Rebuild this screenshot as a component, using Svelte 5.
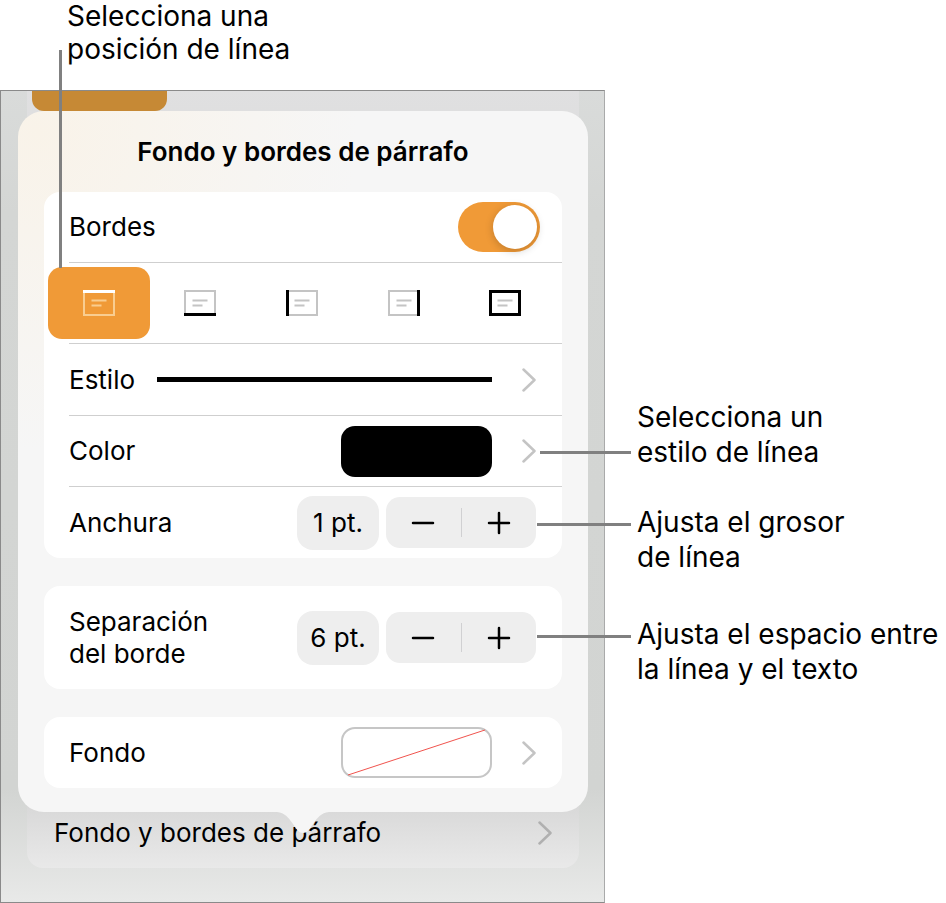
<script>
  let borders = $state(true);
  let position = $state("top");
  let width = $state(1);
  let inset = $state(6);

  const positions = [
    { id: "top", label: "Borde superior", edge: "M0 1.5H32" },
    { id: "bottom", label: "Borde inferior", edge: "M0 24.5H32" },
    { id: "left", label: "Borde izquierdo", edge: "M1.5 0V26" },
    { id: "right", label: "Borde derecho", edge: "M30.5 0V26" },
    { id: "all", label: "Todos los bordes", edge: "M1.5 1.5H30.5V24.5H1.5Z" },
  ];
</script>

{#snippet chevron()}
  <svg class="chevron" width="14" height="24" viewBox="0 0 14 24" aria-hidden="true">
    <path d="M1.5 1.5L12.5 12L1.5 22.5" />
  </svg>
{/snippet}

{#snippet stepper(name, value, change)}
  <div class="amount">
    <input class="value" type="text" aria-label={name} value="{value} pt." readonly />
    <div class="stepper">
      <button type="button" aria-label="Reducir {name}" onclick={() => change(-1)}>
        <svg width="24" height="24" viewBox="0 0 24 24"><path d="M2 12H22" /></svg>
      </button>
      <span class="divider"></span>
      <button type="button" aria-label="Aumentar {name}" onclick={() => change(1)}>
        <svg width="24" height="24" viewBox="0 0 24 24"><path d="M2 12H22M12 2V22" /></svg>
      </button>
    </div>
  </div>
{/snippet}

<main class="figure">
  <p class="callout first">Selecciona una<br />posición de línea</p>

  <div class="body">
    <section class="screen">
      <div class="sheet">
        <div class="tab"></div>
        <button type="button" class="sheet-row">
          <span>Fondo y bordes de párrafo</span>
          {@render chevron()}
        </button>
      </div>

      <div class="popover">
        <h1>Fondo y bordes de párrafo</h1>

        <div class="card">
          <div class="row short switch">
            <label for="borders">Bordes</label>
            <input id="borders" class="toggle" type="checkbox" role="switch" bind:checked={borders} />
          </div>
          <div class="rule"></div>
          <div class="positions">
            {#each positions as p}
              <button
                type="button"
                class:on={position === p.id}
                aria-label={p.label}
                aria-pressed={position === p.id}
                onclick={() => (position = p.id)}
              >
                <svg width="32" height="26" viewBox="0 0 32 26">
                  <path class="frame" d="M1 1H31V25H1Z" />
                  <path class="lines" d="M8.5 10.5H23.5M8.5 15.5H18.5" />
                  <path class="edge" d={p.edge} />
                </svg>
              </button>
            {/each}
          </div>
          <div class="rule"></div>
          <button type="button" class="row">
            <span>Estilo</span>
            <span class="stroke"></span>
            {@render chevron()}
          </button>
          <div class="rule"></div>
          <button type="button" class="row short">
            <span>Color</span>
            <span class="swatch"></span>
            {@render chevron()}
          </button>
          <div class="rule"></div>
          <div class="row">
            <span>Anchura</span>
            {@render stepper("anchura", width, (d) => (width = Math.max(0, width + d)))}
          </div>
        </div>

        <div class="card">
          <div class="row tall">
            <span>Separación<br />del borde</span>
            {@render stepper("separación del borde", inset, (d) => (inset = Math.max(0, inset + d)))}
          </div>
        </div>

        <div class="card">
          <button type="button" class="row">
            <span>Fondo</span>
            <span class="swatch none">
              <svg viewBox="0 0 147 48" preserveAspectRatio="none"><path d="M5 47L142 1" /></svg>
            </span>
            {@render chevron()}
          </button>
        </div>

        <svg class="tail" width="52" height="22" viewBox="0 0 52 22" aria-hidden="true">
          <path d="M0 0C8 1 11 5 16 12C20 18 22 21 26 21C30 21 32 18 36 12C41 5 44 1 52 0Z" />
        </svg>
      </div>
    </section>

    <aside class="notes">
      <p class="callout side low">Selecciona un<br />estilo de línea</p>
      <p class="callout side">Ajusta el grosor<br />de línea</p>
      <p class="callout side">Ajusta el espacio entre<br />la línea y el texto</p>
    </aside>
  </div>
</main>

<style>
  :global(body) {
    margin: 0;
    background: #fff;
  }
  .figure {
    --orange: #f09a37;
    --line: #808080;
    font-family: Inter, "Liberation Sans", sans-serif;
    font-size: 26px;
    line-height: 32px;
    color: #000;
  }
  button,
  input {
    font: inherit;
    color: inherit;
    margin: 0;
    padding: 0;
    border: 0;
    background: none;
    box-sizing: border-box;
  }
  .callout {
    position: relative;
    margin: 0;
    font-size: 28px;
    line-height: 35px;
    white-space: nowrap;
  }
  .first {
    margin: 0 0 24px 67px;
    line-height: 33px;
  }
  /* leader lines run over the screen */
  .callout::before {
    content: "";
    position: absolute;
    background: var(--line);
  }
  .first::before {
    left: -8px;
    top: 50px;
    width: 3px;
    height: 218px;
    z-index: 1;
  }
  .side::before {
    right: calc(100% + 6px);
    top: 18px;
    width: 94px;
    height: 3px;
  }
  .low::before {
    top: 51px;
    width: 91px;
  }
  .body {
    display: flex;
  }
  .notes {
    flex: none;
    width: 309px;
    padding: 310px 0 0 32px;
  }
  .side + .side {
    margin-top: 35px;
  }
  .side + .side + .side {
    margin-top: 42px;
  }

  .screen {
    flex: 1;
    min-width: 0;
    display: grid;
    border: 1px solid #8a8a8a;
    border-right-color: #a9aaaa;
    background: linear-gradient(#d9dbda, #d4d6d4 15%, #d2d4d2 86%, #e8e9e8);
  }
  .sheet,
  .popover {
    grid-area: 1 / 1;
    min-width: 0;
  }
  .sheet {
    display: flex;
    flex-direction: column;
    justify-content: space-between;
    margin: 0 25px 34px 26px;
    border-radius: 0 0 16px 16px;
    background: linear-gradient(#e0e0e1, #dcdcdc 10%, #d8d8d8 92%, #e9e9e9);
  }
  .tab {
    width: 135px;
    height: 20px;
    margin-left: 5px;
    border-radius: 0 0 12px 12px;
    background: #c68935;
  }
  .sheet-row {
    display: flex;
    align-items: center;
    justify-content: space-between;
    height: 70px;
    padding: 0 27px;
    text-align: left;
  }
  .sheet-row .chevron {
    stroke: #b0b0b0;
  }
  .popover {
    position: relative;
    margin: 20px 16px 90px 17px;
    padding: 0 26px 24px;
    border-radius: 26px;
    background: radial-gradient(ellipse 320px 320px at 20px 20px, #f9f3e9, #f6f6f6);
  }
  .tail {
    position: absolute;
    top: 100%;
    left: calc(50% - 26px);
    fill: #f6f6f6;
  }
  h1 {
    margin: 0;
    font-size: 26px;
    font-weight: 600;
    line-height: 81px;
    text-align: center;
  }
  .card {
    border-radius: 16px;
    background: #fff;
  }
  .card + .card {
    margin-top: 28px;
  }
  .rule {
    height: 1px;
    margin-left: 25px;
    background: #cfcfcf;
  }
  .row {
    display: flex;
    align-items: center;
    justify-content: space-between;
    width: 100%;
    height: 71px;
    padding: 0 26px 0 25px;
    box-sizing: border-box;
    text-align: left;
  }
  .short {
    height: 70px;
  }
  .tall {
    height: 103px;
  }
  .switch {
    padding-right: 22px;
  }
  .toggle {
    appearance: none;
    display: flex;
    justify-content: flex-start;
    width: 82px;
    height: 50px;
    padding: 3px;
    border-radius: 25px;
    background: #e4e4e6;
  }
  .toggle::before {
    content: "";
    width: 44px;
    height: 44px;
    border-radius: 50%;
    background: #fff;
    box-shadow: 0 2px 8px rgb(0 0 0 / 20%);
  }
  .toggle:checked {
    justify-content: flex-end;
    background: var(--orange);
  }
  .positions {
    display: flex;
    padding: 4px 6px 4px 4px;
  }
  .positions button {
    flex: 1;
    display: grid;
    place-items: center;
    height: 72px;
    border-radius: 14px;
  }
  .positions svg {
    fill: none;
    stroke: #c4c4c4;
    stroke-width: 2;
  }
  .positions .edge {
    stroke: #000;
    stroke-width: 3;
  }
  .positions .on {
    background: var(--orange);
  }
  .on svg {
    stroke: #f9cd90;
  }
  .positions .on .edge {
    stroke: #fff;
  }
  .chevron {
    flex: none;
    fill: none;
    stroke: #c4c4c4;
    stroke-width: 2.5;
    stroke-linecap: round;
    stroke-linejoin: round;
  }
  .stroke {
    flex: 1;
    height: 5px;
    margin: 0 30px 0 22px;
    background: #000;
  }
  .swatch {
    width: 151px;
    height: 51px;
    margin: 0 30px 0 auto;
    border-radius: 14px;
    box-sizing: border-box;
    background: #000;
  }
  .none {
    display: flex;
    border: 2px solid #c6c6c6;
    background: #fff;
  }
  .none svg {
    width: 100%;
    height: 100%;
    fill: none;
    stroke: #f0514b;
    stroke-width: 1;
  }
  .amount {
    display: flex;
    align-items: center;
    gap: 7px;
  }
  .value {
    width: 82px;
    height: 54px;
    border-radius: 16px;
    background: #eee;
    text-align: center;
  }
  .stepper {
    display: flex;
    align-items: center;
    width: 150px;
    height: 51px;
    border-radius: 14px;
    background: #eee;
  }
  .stepper button {
    flex: 1;
    display: grid;
    place-items: center;
    height: 100%;
  }
  .stepper svg {
    fill: none;
    stroke: #000;
    stroke-width: 2.5;
    stroke-linecap: round;
  }
  .divider {
    width: 1px;
    height: 29px;
    background: #d0d0d2;
  }
</style>
